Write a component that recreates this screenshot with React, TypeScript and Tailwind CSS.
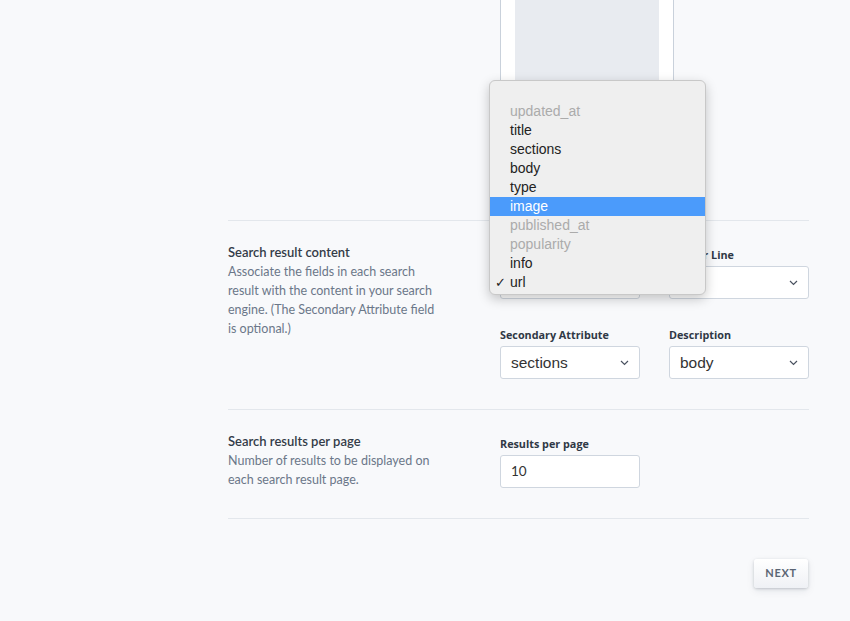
import React from "react";

const FONT = { fontFamily: "Lato, 'Open Sans', sans-serif" };
const MAC = { fontFamily: "'Liberation Sans', Arial, sans-serif" };
const LABEL = { fontFamily: "'Open Sans', Lato, sans-serif" };

function Chevron() {
  return (
    <svg width="9" height="6" viewBox="0 0 9 6" className="shrink-0">
      <path d="M1 1l3.5 3.5L8 1" fill="none" stroke="#4a5260" strokeWidth="1.2" />
    </svg>
  );
}

function Field({ label, value, select = true }: { label: string; value: string; select?: boolean }) {
  return (
    <div className="flex w-[140px] flex-col">
      <span style={LABEL} className="mb-[4px] text-[10.8px] leading-[14px] font-bold text-[#2f3845]">
        {label}
      </span>
      <div className="flex h-[33px] items-center justify-between rounded-[3px] border border-[#cfd6df] bg-white pr-[10px] pl-[10px]">
        {select ? (
          <span style={MAC} className="text-[15.5px] text-[#333]">
            {value}
          </span>
        ) : (
          <span className="text-[13.5px] text-[#333]">{value}</span>
        )}
        {select && <Chevron />}
      </div>
    </div>
  );
}

const options: { label: string; disabled?: boolean; active?: boolean; checked?: boolean }[] = [
  { label: "" },
  { label: "updated_at", disabled: true },
  { label: "title" },
  { label: "sections" },
  { label: "body" },
  { label: "type" },
  { label: "image", active: true },
  { label: "published_at", disabled: true },
  { label: "popularity", disabled: true },
  { label: "info" },
  { label: "url", checked: true },
];

export default function App() {
  return (
    <div style={FONT} className="relative h-[621px] w-[850px] overflow-hidden bg-[#f8f9fb]">
      <div className="ml-[228px] w-[581px]">
        {/* image preview (top cut off) */}
        <div className="flex h-[221px] border-b border-[#e3e7ec] pl-[272px]">
          <div className="h-[190px] w-[174px] border-x border-b border-[#c9d1db] bg-white px-[14px] pb-[14px]">
            <div className="h-full bg-[#e8ebf0]" />
          </div>
        </div>

        <div className="flex items-start border-b border-[#e3e7ec] pt-[22px] pb-[30px]">
          <div className="w-[272px] shrink-0">
            <h3 className="text-[13px] leading-[19px] font-semibold text-[#343c48]">Search result content</h3>
            <p className="w-[215px] text-[12.5px] leading-[19px] text-[#6b7789]">
              Associate the fields in each search result with the content in your search engine. (The Secondary
              Attribute field is optional.)
            </p>
          </div>
          <div className="mt-[5px] grid grid-cols-[140px_140px] gap-x-[29px] gap-y-[29px]">
            <Field label="URL" value="url" />
            <Field label="Header Line" value="title" />
            <Field label="Secondary Attribute" value="sections" />
            <Field label="Description" value="body" />
          </div>
        </div>

        <div className="flex items-start border-b border-[#e3e7ec] pt-[22px] pb-[29px]">
          <div className="w-[272px] shrink-0">
            <h3 className="text-[13px] leading-[19px] font-semibold text-[#343c48]">Search results per page</h3>
            <p className="w-[215px] text-[12.5px] leading-[19px] text-[#6b7789]">
              Number of results to be displayed on each search result page.
            </p>
          </div>
          <div className="mt-[5px]">
            <Field label="Results per page" value="10" select={false} />
          </div>
        </div>

        <div className="flex justify-end pt-[40px] pr-px">
          <button className="h-[29px] w-[54px] rounded-[3px] bg-gradient-to-b from-white to-[#eff1f5] text-[11px] font-bold tracking-[0.06em] text-[#5b6574] shadow-[0_1px_3px_rgba(30,40,60,0.22),0_3px_8px_rgba(30,40,60,0.08)]">
            NEXT
          </button>
        </div>
      </div>

      {/* native select menu */}
      <div
        style={MAC}
        className="absolute top-[80px] left-[489px] w-[217px] rounded-[6px] border border-[#c8c8c8] bg-[#efefef] py-[2px] shadow-[0_4px_12px_rgba(0,0,0,0.22)]"
      >
        {options.map((o, i) => (
          <div
            key={i}
            className={
              "relative h-[19px] pl-[20px] text-[14px] leading-[19px] " +
              (o.active ? "bg-[#4b9bfb] text-white" : o.disabled ? "text-[#ababab]" : "text-[#222]")
            }
          >
            {o.checked && <span className="absolute left-[5px] text-[13px]">✓</span>}
            {o.label}
          </div>
        ))}
      </div>
    </div>
  );
}
